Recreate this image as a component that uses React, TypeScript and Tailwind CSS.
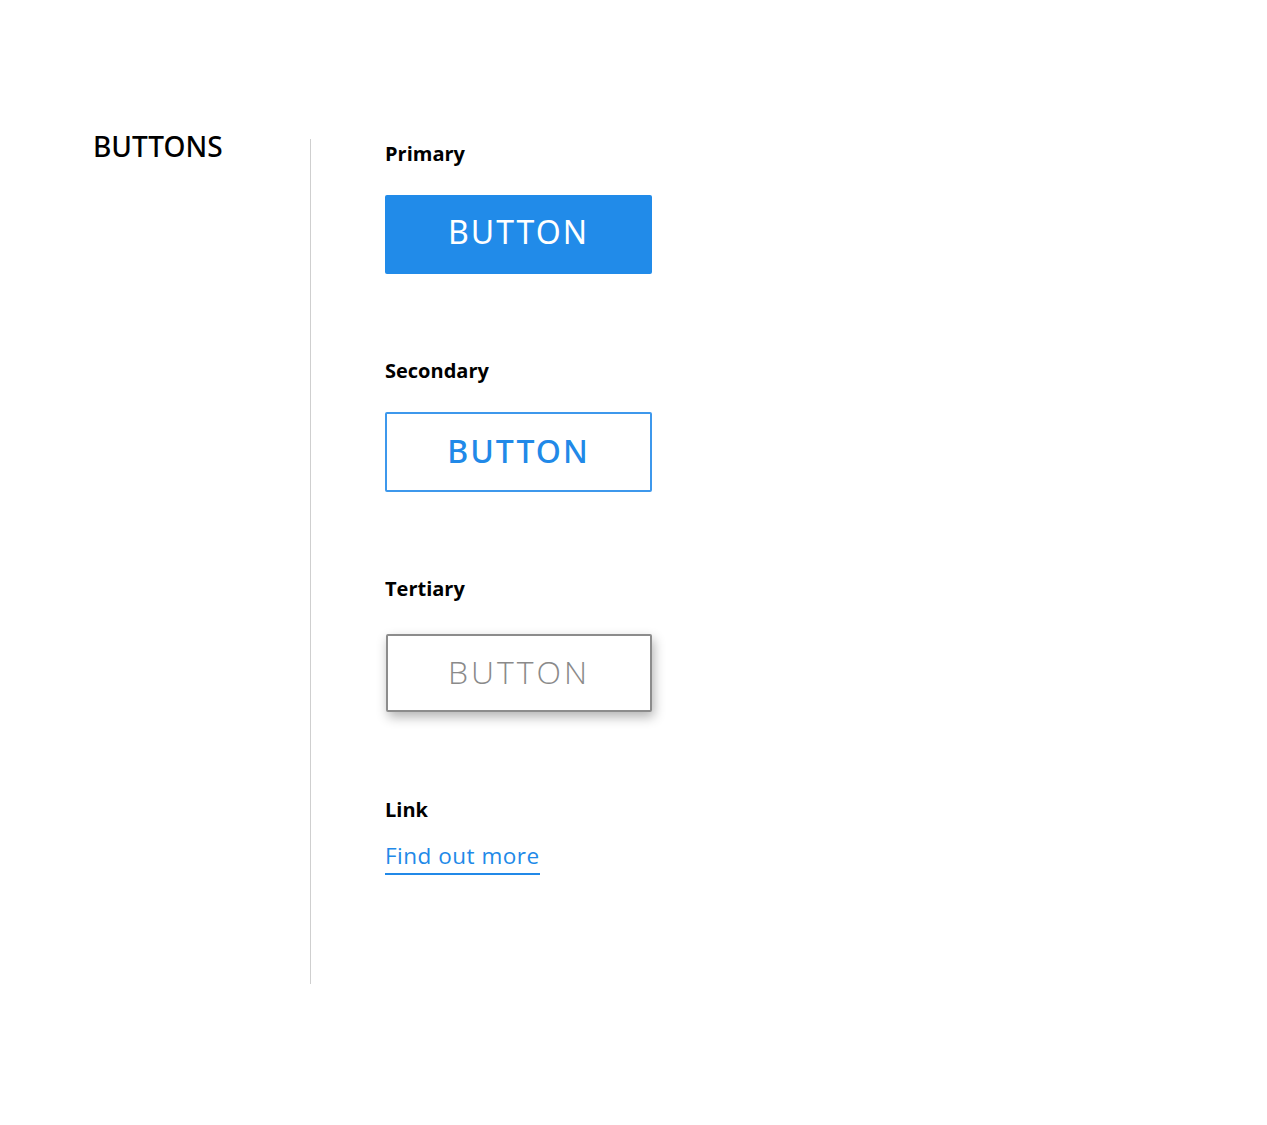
export default function App() {
  const font = { fontFamily: '"Open Sans", "Noto Sans", sans-serif' };
  const noto = { fontFamily: '"Noto Sans", "Open Sans", sans-serif' };
  return (
    <div className="min-h-[1125px] w-full bg-white" style={font}>
      <div className="flex pt-[139px] pl-[93px]">
        <div className="w-[217px] -mt-[7px]">
          <h1 className="text-[28px] leading-[28px] text-black font-medium" style={noto}>BUTTONS</h1>
        </div>
        <div className="w-px bg-[#cfcfcf] self-stretch" />
        <div className="pl-[74px] pt-[5px] pb-[109px] flex flex-col items-start">
          <div className="text-[20px] leading-[20px] font-bold text-black">Primary</div>
          <button className="mt-[31px] w-[267px] h-[79px] pb-[5px] bg-[#218be9] rounded-[2px] text-white text-[32px] tracking-[2px] font-normal" style={noto}>
            BUTTON
          </button>

          <div className="mt-[87px] text-[20px] leading-[20px] font-bold text-black">Secondary</div>
          <button className="mt-[31px] w-[267px] h-[80px] pb-[3px] bg-white border-2 border-[#3d98ec] rounded-[2px] text-[#2189e8] text-[32px] tracking-[2px] font-medium" style={noto}>
            BUTTON
          </button>

          <div className="mt-[87px] text-[20px] leading-[20px] font-bold text-black">Tertiary</div>
          <button className="mt-[35px] ml-px w-[266px] h-[78px] pb-[3px] bg-white border-2 border-[#8c8c8c] rounded-[2px] text-[#8a8a8a] text-[32px] tracking-[3px] font-light shadow-[2px_5px_12px_rgba(0,0,0,0.3)]">
            BUTTON
          </button>

          <div className="mt-[88px] text-[20px] leading-[20px] font-bold text-black">Link</div>
          <a href="#" className="mt-[25px] inline-block text-[22.5px] leading-[22.5px] text-[#2189e8] tracking-[0.5px] pb-[5px] border-b-2 border-[#2189e8]">
            Find out more
          </a>
        </div>
      </div>
    </div>
  );
}
